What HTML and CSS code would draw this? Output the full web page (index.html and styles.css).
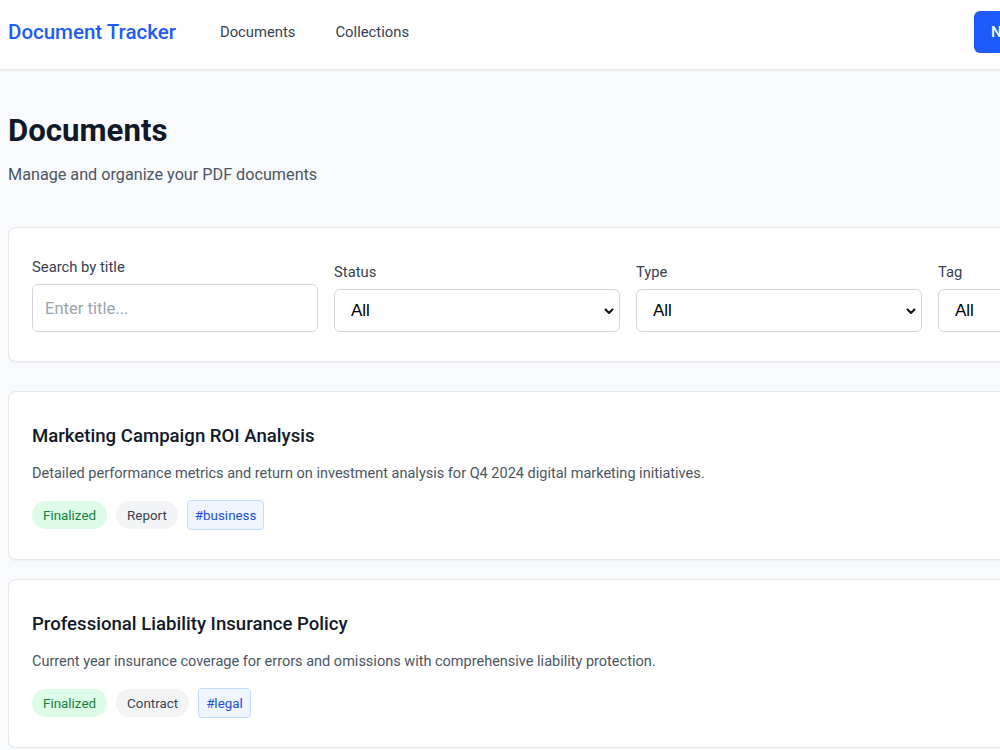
FILE: index.html
```html
<!DOCTYPE html>
<html lang="en">
<head>
<meta charset="utf-8">
<title>Document Tracker</title>
<link rel="stylesheet" href="styles.css">
</head>
<body>
<header class="topbar">
  <div class="topbar-inner">
    <a class="logo" href="#">Document Tracker</a>
    <nav class="nav">
      <a href="#">Documents</a>
      <a href="#">Collections</a>
    </nav>
    <button class="btn-primary">New Document</button>
  </div>
</header>
<main class="main">
  <h1 class="page-title">Documents</h1>
  <p class="page-sub">Manage and organize your PDF documents</p>

  <section class="filters">
    <div class="field">
      <label class="label">Search by title</label>
      <input class="input" type="text" placeholder="Enter title...">
    </div>
    <div class="field">
      <label class="label">Status</label>
      <div class="select-wrap">
        <select class="select"><option>All</option></select>
        <svg class="chev" width="10" height="7" viewBox="0 0 10 7"><path d="M1.5 1.5 L5 5 L8.5 1.5" fill="none" stroke="#111" stroke-width="2" stroke-linecap="round" stroke-linejoin="round"/></svg>
      </div>
    </div>
    <div class="field">
      <label class="label">Type</label>
      <div class="select-wrap">
        <select class="select"><option>All</option></select>
        <svg class="chev" width="10" height="7" viewBox="0 0 10 7"><path d="M1.5 1.5 L5 5 L8.5 1.5" fill="none" stroke="#111" stroke-width="2" stroke-linecap="round" stroke-linejoin="round"/></svg>
      </div>
    </div>
    <div class="field">
      <label class="label">Tag</label>
      <div class="select-wrap">
        <select class="select"><option>All</option></select>
        <svg class="chev" width="10" height="7" viewBox="0 0 10 7"><path d="M1.5 1.5 L5 5 L8.5 1.5" fill="none" stroke="#111" stroke-width="2" stroke-linecap="round" stroke-linejoin="round"/></svg>
      </div>
    </div>
  </section>

  <article class="doc-card">
    <h2 class="doc-title">Marketing Campaign ROI Analysis</h2>
    <p class="doc-desc">Detailed performance metrics and return on investment analysis for Q4 2024 digital marketing initiatives.</p>
    <div class="badges">
      <span class="badge badge-green">Finalized</span>
      <span class="badge badge-gray">Report</span>
      <span class="tag">#business</span>
    </div>
  </article>

  <article class="doc-card">
    <h2 class="doc-title">Professional Liability Insurance Policy</h2>
    <p class="doc-desc">Current year insurance coverage for errors and omissions with comprehensive liability protection.</p>
    <div class="badges">
      <span class="badge badge-green">Finalized</span>
      <span class="badge badge-gray">Contract</span>
      <span class="tag">#legal</span>
    </div>
  </article>
</main>
</body>
</html>
```

FILE: styles.css
```css
html, body {
  margin: 0;
  padding: 0;
  overflow: hidden;
}
body {
  background: #f9fafb;
  font-family: Roboto, "Noto Sans", "Liberation Sans", sans-serif;
  color: #111827;
  width: 1400px;
}
.topbar {
  background: #fff;
  border-bottom: 1px solid #e5e7eb;
  box-shadow: 0 1px 3px rgba(0,0,0,0.06);
  height: 69px;
}
.topbar-inner {
  display: flex;
  align-items: center;
  height: 63px;
  width: 1120px;
  padding-left: 8px;
}
.logo {
  font-size: 20.5px;
  font-weight: 500;
  color: #1d5cfa;
  text-decoration: none;
}
.nav {
  display: flex;
  gap: 40px;
  margin-left: 44px;
}
.nav a {
  font-size: 14.8px;
  font-weight: 400;
  color: #374151;
  text-decoration: none;
}
.btn-primary {
  margin-left: auto;
  width: 154px;
  height: 42px;
  border: none;
  border-radius: 6px;
  background: #1d5cfa;
  color: #fff;
  font-family: inherit;
  font-size: 15px;
  font-weight: 500;
  text-align: left;
  padding-left: 17px;
}
.main {
  padding: 41px 0 0 8px;
  width: 1240px;
}
.page-title {
  margin: 0;
  font-size: 31.2px;
  line-height: 40px;
  font-weight: 700;
  color: #111827;
}
.page-sub {
  margin: 12px 0 0;
  font-size: 16.2px;
  line-height: 24px;
  color: #4b5563;
}
.filters {
  margin-top: 40px;
  background: #fff;
  border: 1px solid #e5e7eb;
  border-radius: 8px;
  box-shadow: 0 1px 2px rgba(0,0,0,0.05);
  padding: 29px 23px 29px;
  display: grid;
  grid-template-columns: repeat(4, 286px);
  gap: 16px;
  align-items: end;
}
.field {
  display: flex;
  flex-direction: column;
  gap: 7px;
}
.label {
  font-size: 14.8px;
  line-height: 20px;
  font-weight: 400;
  color: #374151;
}
.input {
  box-sizing: border-box;
  height: 48px;
  border: 1px solid #d1d5db;
  border-radius: 6px;
  padding: 0 12px;
  font-family: inherit;
  font-size: 16.6px;
  color: #111827;
  background: #fff;
}
.input::placeholder {
  color: #9ca3af;
}
.select-wrap {
  position: relative;
}
.select {
  box-sizing: border-box;
  width: 100%;
  height: 43px;
  border: 1px solid #d1d5db;
  border-radius: 6px;
  padding: 0 16px;
  font-family: "Liberation Sans", Arial, sans-serif;
  font-size: 17px;
  color: #000;
  background: #fff;
  -webkit-appearance: none;
  appearance: none;
}
.chev {
  position: absolute;
  right: 6px;
  top: 19px;
  pointer-events: none;
}
.doc-card {
  background: #fff;
  border: 1px solid #e5e7eb;
  border-radius: 8px;
  box-shadow: 0 1px 2px rgba(0,0,0,0.05);
  padding: 30px 23px 29px;
  margin-top: 29px;
}
.doc-card + .doc-card {
  margin-top: 19px;
}
.doc-title {
  margin: 0;
  font-size: 18.6px;
  line-height: 28px;
  font-weight: 500;
  color: #111827;
}
.doc-desc {
  margin: 13px 0 0;
  font-size: 14.5px;
  line-height: 22px;
  color: #4b5563;
}
.badges {
  display: flex;
  gap: 9px;
  margin-top: 15px;
  align-items: center;
}
.badge {
  display: inline-flex;
  align-items: center;
  height: 28px;
  padding: 0 11px;
  border-radius: 14px;
  font-size: 13.4px;
  font-weight: 400;
}
.badge-green {
  background: #dcfce7;
  color: #15803d;
}
.badge-gray {
  background: #f3f4f6;
  color: #374151;
}
.tag {
  display: inline-flex;
  align-items: center;
  box-sizing: border-box;
  height: 30px;
  padding: 0 7px;
  border: 1px solid #bfdbfe;
  border-radius: 4px;
  background: #eff6ff;
  color: #1d4ed8;
  font-size: 13.4px;
  font-weight: 400;
}
```
